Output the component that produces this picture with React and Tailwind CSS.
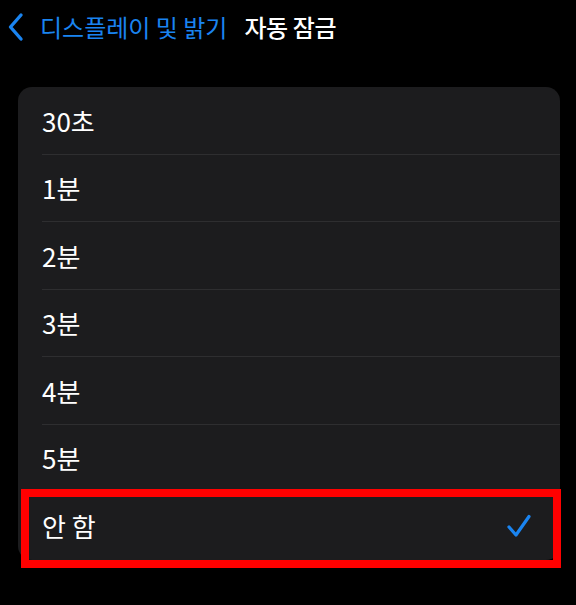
import React from "react";

const options = ["30초", "1분", "2분", "3분", "4분", "5분", "안 함"];
const selected = "안 함";

function Chevron() {
  return (
    <svg width="18" height="30" viewBox="0 0 18 30" fill="none">
      <path d="M14 3 L3.5 15 L14 27" stroke="#1a84f0" strokeWidth="3.4" strokeLinecap="round" strokeLinejoin="round" />
    </svg>
  );
}

function Check() {
  return (
    <svg width="26" height="26" viewBox="0 0 26 26" fill="none">
      <path d="M3 14 L10 22 L23 3.5" stroke="#1a84f0" strokeWidth="3.2" strokeLinecap="round" strokeLinejoin="round" />
    </svg>
  );
}

export default function App() {
  return (
    <div
      className="relative w-[576px] h-[605px] bg-black overflow-hidden"
      style={{ fontFamily: '"Noto Sans CJK KR", "Noto Sans", sans-serif' }}
    >
      {/* nav bar */}
      <div className="flex items-center h-[54px] pl-[7px] pb-[1px]">
        <Chevron />
        <span className="ml-[15px] text-[24px] text-[#1a84f0]">디스플레이 및 밝기</span>
        <span className="ml-[17px] text-[24px] text-white font-medium tracking-[-0.4px]">자동 잠금</span>
      </div>

      {/* option list */}
      <div className="ml-[18px] mt-[33px] w-[542px] rounded-[14px] bg-[#1c1c1e] overflow-hidden">
        {options.map((opt, i) => (
          <div key={opt} className="pl-[24px]">
            <div
              className={
                "flex items-center justify-between h-[67.5px] pr-[28px] " +
                (i < options.length - 1 ? "border-b border-[#2e2e30]" : "")
              }
            >
              <span className="text-[26px] text-white">{opt}</span>
              {opt === selected && <Check />}
            </div>
          </div>
        ))}
      </div>

      {/* highlight overlay */}
      <div className="absolute left-[21px] top-[489px] w-[540px] h-[79px] border-[8px] border-[#ff0000]" />
    </div>
  );
}
